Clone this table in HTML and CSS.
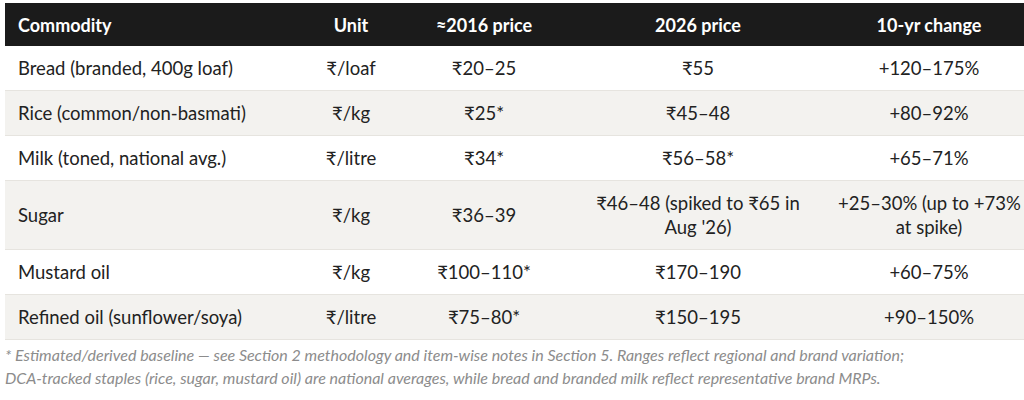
FILE: index.html
```html
<!DOCTYPE html>
<html lang="en">
<head>
<meta charset="utf-8">
<title>Commodity prices</title>
<link rel="stylesheet" href="styles.css">
</head>
<body>
<div class="page">
  <table class="prices">
    <colgroup>
      <col class="c-name">
      <col class="c-unit">
      <col class="c-old">
      <col class="c-new">
      <col class="c-chg">
    </colgroup>
    <thead>
      <tr>
        <th class="left">Commodity</th>
        <th>Unit</th>
        <th>≈2016 price</th>
        <th>2026 price</th>
        <th>10-yr change</th>
      </tr>
    </thead>
    <tbody>
      <tr>
        <td class="left">Bread (branded, 400g loaf)</td>
        <td>₹/loaf</td>
        <td>₹20–25</td>
        <td>₹55</td>
        <td>+120–175%</td>
      </tr>
      <tr>
        <td class="left">Rice (common/non-basmati)</td>
        <td>₹/kg</td>
        <td>₹25*</td>
        <td>₹45–48</td>
        <td>+80–92%</td>
      </tr>
      <tr>
        <td class="left">Milk (toned, national avg.)</td>
        <td>₹/litre</td>
        <td>₹34*</td>
        <td>₹56–58*</td>
        <td>+65–71%</td>
      </tr>
      <tr>
        <td class="left">Sugar</td>
        <td>₹/kg</td>
        <td>₹36–39</td>
        <td class="wrap">₹46–48 (spiked to ₹65 in<br>Aug '26)</td>
        <td class="wrap">+25–30% (up to +73%<br>at spike)</td>
      </tr>
      <tr>
        <td class="left">Mustard oil</td>
        <td>₹/kg</td>
        <td>₹100–110*</td>
        <td>₹170–190</td>
        <td>+60–75%</td>
      </tr>
      <tr>
        <td class="left">Refined oil (sunflower/soya)</td>
        <td>₹/litre</td>
        <td>₹75–80*</td>
        <td>₹150–195</td>
        <td>+90–150%</td>
      </tr>
    </tbody>
  </table>
  <p class="note">* Estimated/derived baseline — see Section 2 methodology and item-wise notes in Section 5. Ranges reflect regional and brand variation;<br>DCA-tracked staples (rice, sugar, mustard oil) are national averages, while bread and branded milk reflect representative brand MRPs.</p>
</div>
</body>
</html>
```
FILE: styles.css
```css
html, body {
  margin: 0;
  padding: 0;
  background: #ffffff;
}
.page {
  padding: 3px 0 0 5px;
  font-family: Lato, "Liberation Sans", sans-serif;
  color: #222222;
}
.prices {
  width: 1019px;
  border-collapse: collapse;
  table-layout: fixed;
  font-size: 18.5px;
}
.c-name { width: 291px; }
.c-unit { width: 110px; }
.c-old { width: 156px; }
.c-new { width: 272px; }
.c-chg { width: 190px; }
.prices th {
  background: #1b1b1b;
  color: #ffffff;
  font-weight: 700;
  font-size: 18px;
  height: 43px;
  padding: 0 12px;
  text-align: center;
  vertical-align: middle;
}
.prices td {
  padding: 10px 4px;
  text-align: center;
  vertical-align: middle;
  line-height: 24px;
  border-bottom: 1px solid #e6e4df;
}
.prices td.wrap {
  white-space: nowrap;
}
.prices tbody tr:nth-child(even) td {
  background: #f3f2ef;
}
.prices .left {
  text-align: left;
  padding-left: 13px;
}
.note {
  margin: 3px 0 0 0;
  font-size: 16px;
  font-style: italic;
  line-height: 23px;
  color: #8c8c8c;
  white-space: nowrap;
}
```
